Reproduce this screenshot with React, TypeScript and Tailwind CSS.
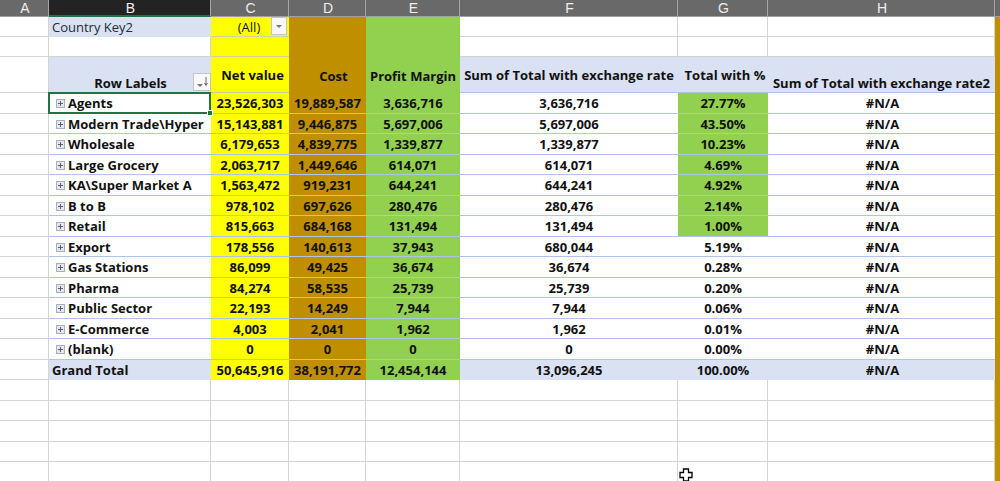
import React from 'react';

const rows = [
  ['Agents', '23,526,303', '19,889,587', '3,636,716', '3,636,716', '27.77%'],
  ['Modern Trade\\Hyper', '15,143,881', '9,446,875', '5,697,006', '5,697,006', '43.50%'],
  ['Wholesale', '6,179,653', '4,839,775', '1,339,877', '1,339,877', '10.23%'],
  ['Large Grocery', '2,063,717', '1,449,646', '614,071', '614,071', '4.69%'],
  ['KA\\Super Market A', '1,563,472', '919,231', '644,241', '644,241', '4.92%'],
  ['B to B', '978,102', '697,626', '280,476', '280,476', '2.14%'],
  ['Retail', '815,663', '684,168', '131,494', '131,494', '1.00%'],
  ['Export', '178,556', '140,613', '37,943', '680,044', '5.19%'],
  ['Gas Stations', '86,099', '49,425', '36,674', '36,674', '0.28%'],
  ['Pharma', '84,274', '58,535', '25,739', '25,739', '0.20%'],
  ['Public Sector', '22,193', '14,249', '7,944', '7,944', '0.06%'],
  ['E-Commerce', '4,003', '2,041', '1,962', '1,962', '0.01%'],
  ['(blank)', '0', '0', '0', '0', '0.00%'],
];

const columns = ['A', 'B', 'C', 'D', 'E', 'F', 'G', 'H'];
const plain = 'border-r border-b border-[#d4d4d4] bg-white';
const data = 'flex items-center justify-center pt-[2px] border-b border-[#b0c4ea]';
const total = 'flex items-center justify-center pt-[2px]';

const PlusBox = () => (
  <svg width="9" height="9" viewBox="0 0 9 9" className="mr-[3px] shrink-0">
    <rect x="0.5" y="0.5" width="8" height="8" fill="#e4e7ee" stroke="#a9aebb" />
    <path d="M2 4.5h5M4.5 2v5" stroke="#5a5f6c" strokeWidth="1" />
  </svg>
);

const App = () => {
  return (
    <div className="relative w-[1000px] h-[481px] overflow-hidden bg-white text-[#111] text-[13px] font-bold leading-none font-['Open_Sans','Noto_Sans',sans-serif]">
      <div className="grid grid-cols-[49px_162px_78px_77px_94px_218px_90px_227px_5px] grid-rows-[17px_20px_20px_36px_repeat(19,20.5px)]">
        {/* column headers */}
        {columns.map((c) => (
          <div
            key={c}
            className={`flex items-center justify-center pl-[2px] border-r border-[#a6a6a6] text-[14px] font-normal font-['Liberation_Sans',sans-serif] text-[#eeeeee] ${
              c === 'B' ? 'bg-[#232323] border-b-2 border-b-[#217346]' : 'bg-[#696969] border-b border-b-[#a0a0a0]'
            }`}
          >
            {c}
          </div>
        ))}
        <div className="bg-[#696969] border-b border-[#a0a0a0]" />

        {/* filter row */}
        <div className={plain} />
        <div className="flex items-center pl-[3px] pt-[1px] bg-[#d9e1f2] font-normal text-[#222b3a]">Country Key2</div>
        <div className="relative flex items-center justify-center pr-[2px] pt-[1px] bg-[#ffff00] border-b border-[#d2d2a0] font-normal">
          (All)
          <div className="absolute right-[2px] top-0 flex h-[18px] w-[16px] items-center justify-center border border-[#c4c4c4] bg-[#f8f8f8]">
            <svg width="6" height="3" viewBox="0 0 6 3">
              <path d="M0 0h6L3 3z" fill="#777" />
            </svg>
          </div>
        </div>
        <div className="bg-[#bf8f00]" />
        <div className="bg-[#92d050]" />
        <div className={plain} />
        <div className={plain} />
        <div className={plain} />
        <div className="bg-[#bf8f00]" />

        {/* blank row */}
        <div className={plain} />
        <div className={plain} />
        <div className="bg-[#ffff00] border-b border-[#d2d2a0]" />
        <div className="bg-[#bf8f00]" />
        <div className="bg-[#92d050]" />
        <div className={plain} />
        <div className={plain} />
        <div className={plain} />
        <div className="bg-[#bf8f00]" />

        {/* pivot header */}
        <div className={plain} />
        <div className="relative flex items-end justify-center pb-[2px] pl-[1px] bg-[#d9e1f2] border-b border-[#b0c4ea]">
          Row Labels
          <div className="absolute right-0 bottom-[1px] flex h-[18px] w-[18px] items-center justify-center border border-[#c4c4c4] bg-[#f8f8f8]">
            <svg width="13" height="12" viewBox="0 0 13 12">
              <path d="M1 8h6L4 11z" fill="#777" />
              <path d="M10 1v8M8.5 7l1.5 2.5L11.5 7" fill="none" stroke="#666" strokeWidth="1" />
            </svg>
          </div>
        </div>
        <div className="flex items-center justify-center pl-[5px] pt-[2px] bg-[#ffff00] border-b border-[#c8c8a0]">Net value</div>
        <div className="flex items-center justify-center pl-[12px] pt-[2px] bg-[#bf8f00]">Cost</div>
        <div className="flex items-center justify-center pt-[2px] bg-[#92d050]">Profit Margin</div>
        <div className="flex items-center justify-center pt-[2px] bg-[#d9e1f2] border-b border-[#b0c4ea]">Sum of Total with exchange rate</div>
        <div className="flex items-center justify-center pl-[4px] pt-[2px] bg-[#d9e1f2] border-b border-[#b0c4ea]">Total with %</div>
        <div className="flex items-end justify-center pb-[2px] bg-[#d9e1f2] border-b border-[#b0c4ea]">Sum of Total with exchange rate2</div>
        <div className="bg-[#bf8f00]" />

        {/* data rows */}
        {rows.map((r, i) => (
          <React.Fragment key={r[0]}>
            <div className={plain} />
            <div
              className={
                i === 0
                  ? 'relative z-10 flex items-center pl-[6px] pt-[1px] border-2 border-[#217346] -mt-px -ml-px bg-white'
                  : 'flex items-center pl-[7px] pt-[2px] border-b border-[#b0c4ea] bg-white'
              }
            >
              <PlusBox />
              {r[0]}
              {i === 0 && <div className="absolute -right-[4px] -bottom-[4px] h-[6px] w-[6px] border border-white bg-[#217346]" />}
            </div>
            <div className={`${data} bg-[#ffff00]`}>{r[1]}</div>
            <div className={`${data} bg-[#bf8f00]`}>{r[2]}</div>
            <div className={`${data} bg-[#92d050]`}>{r[3]}</div>
            <div className={`${data} bg-white`}>{r[4]}</div>
            <div className={`${data} ${i < 7 ? 'bg-[#92d050]' : 'bg-white'}`}>{r[5]}</div>
            <div className={`${data} pl-[2px] bg-white`}>#N/A</div>
            <div className="bg-[#bf8f00]" />
          </React.Fragment>
        ))}

        {/* grand total */}
        <div className={plain} />
        <div className="flex items-center pl-[3px] pt-[2px] bg-[#d9e1f2]">Grand Total</div>
        <div className={`${total} bg-[#ffff00]`}>50,645,916</div>
        <div className={`${total} bg-[#bf8f00]`}>38,191,772</div>
        <div className={`${total} bg-[#92d050]`}>12,454,144</div>
        <div className={`${total} bg-[#d9e1f2]`}>13,096,245</div>
        <div className={`${total} bg-[#d9e1f2]`}>100.00%</div>
        <div className={`${total} pl-[2px] bg-[#d9e1f2]`}>#N/A</div>
        <div className="bg-[#bf8f00]" />

        {/* empty rows under the table */}
        {[0, 1, 2, 3, 4].map((n) => (
          <React.Fragment key={n}>
            {[0, 1, 2, 3, 4, 5, 6, 7].map((c) => (
              <div key={c} className={plain} />
            ))}
            <div className="bg-[#bf8f00]" />
          </React.Fragment>
        ))}
      </div>

      {/* excel cell cursor */}
      <svg width="14" height="14" viewBox="0 0 14 14" className="absolute left-[679px] top-[468px]">
        <path d="M4.5 1h5v3.5H13v5H9.5V13h-5V9.5H1v-5h3.5z" fill="#fff" stroke="#000" strokeWidth="1.3" />
      </svg>
    </div>
  );
};

export default App;
